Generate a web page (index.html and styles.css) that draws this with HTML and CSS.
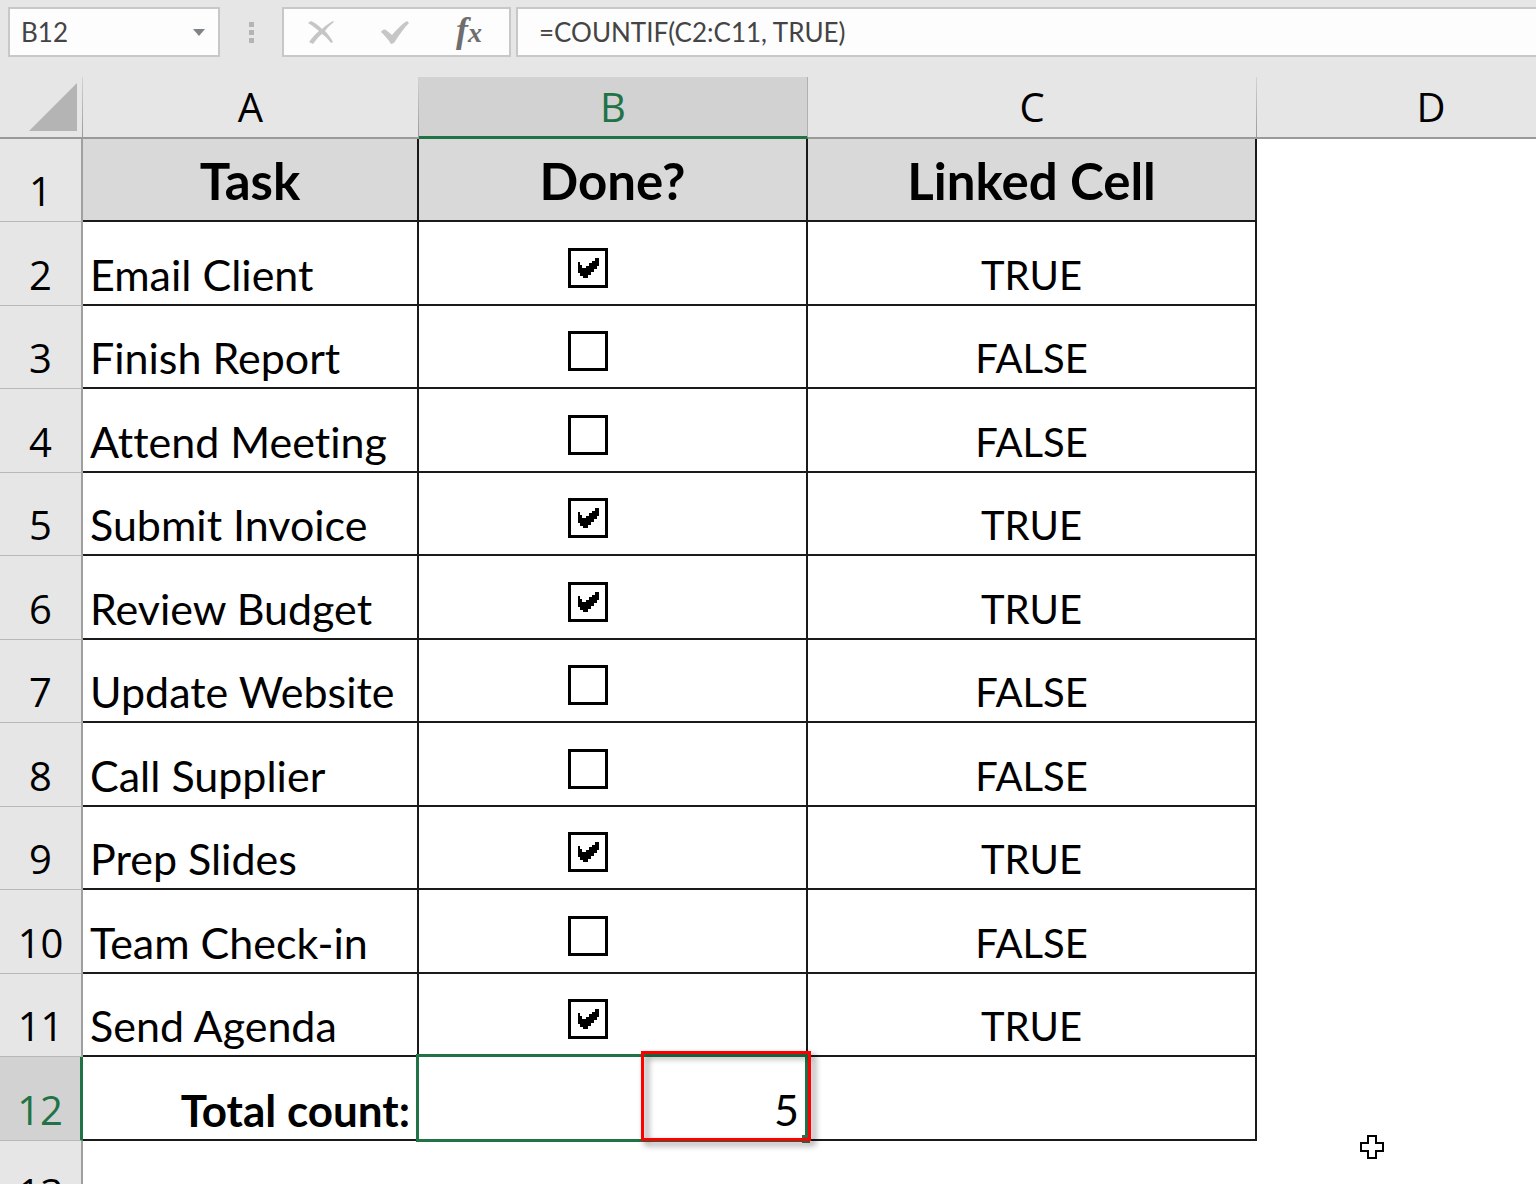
FILE: index.html
```
<!DOCTYPE html>
<html lang="en">
<head>
    <meta charset="UTF-8">
    <meta name="viewport" content="width=device-width, initial-scale=1.0">
    <title>Task checklist</title>
    <link rel="stylesheet" href="styles.css">
</head>
<body>
    <div class="formula-bar">
        <div class="name-box">
            <input type="text" value="B12" aria-label="Name box">
            <button type="button" aria-label="Open name list">
                <svg width="12" height="7" viewBox="0 0 12 7"><path d="M0 0h12L6 7z" fill="#7f8487"/></svg>
            </button>
        </div>
        <div class="grip"><span></span><span></span><span></span></div>
        <div class="tools">
            <button type="button" aria-label="Cancel">
                <svg width="28" height="26" viewBox="0 0 28 26"><path d="M1 4l3-2c5 2 8 5 11 8 3-3 7-6 11-8l1 1c-4 3-7 6-9 9 3 3 6 7 8 11l-2 1c-3-4-6-7-9-9-4 3-6 6-9 10l-4-2c3-4 6-8 10-11C8 9 5 6 1 4z" fill="#c6c6c6"/></svg>
            </button>
            <button type="button" aria-label="Enter">
                <svg width="30" height="26" viewBox="0 0 30 26"><path d="M1 13c1-2 3-3 5-2l6 5C17 10 22 5 27 2l2 2c-5 5-10 12-15 20l-3 1c-3-5-6-8-10-12z" fill="#c6c6c6"/></svg>
            </button>
            <button type="button" class="fx" aria-label="Insert function"><span class="f">f</span><span class="x">x</span></button>
        </div>
        <input class="formula" type="text" value="=COUNTIF(C2:C11, TRUE)" aria-label="Formula">
    </div>

    <div class="sheet">
        <table>
            <colgroup>
                <col class="col-num">
                <col class="col-a">
                <col class="col-b">
                <col class="col-c">
                <col class="col-d">
            </colgroup>
            <thead>
                <tr>
                    <th class="corner"><svg width="48" height="48" viewBox="0 0 48 48"><path d="M48 0v48H0z" fill="#b4b4b4"/></svg></th>
                    <th>A</th>
                    <th class="active">B</th>
                    <th>C</th>
                    <th>D</th>
                </tr>
            </thead>
            <tbody>
                <tr class="titles"><th>1</th><td>Task</td><td>Done?</td><td>Linked Cell</td><td></td></tr>
                <tr><th>2</th><td>Email Client</td><td><input type="checkbox" aria-label="Email Client" checked></td><td>TRUE</td><td></td></tr>
                <tr><th>3</th><td>Finish Report</td><td><input type="checkbox" aria-label="Finish Report"></td><td>FALSE</td><td></td></tr>
                <tr><th>4</th><td>Attend Meeting</td><td><input type="checkbox" aria-label="Attend Meeting"></td><td>FALSE</td><td></td></tr>
                <tr><th>5</th><td>Submit Invoice</td><td><input type="checkbox" aria-label="Submit Invoice" checked></td><td>TRUE</td><td></td></tr>
                <tr><th>6</th><td>Review Budget</td><td><input type="checkbox" aria-label="Review Budget" checked></td><td>TRUE</td><td></td></tr>
                <tr><th>7</th><td>Update Website</td><td><input type="checkbox" aria-label="Update Website"></td><td>FALSE</td><td></td></tr>
                <tr><th>8</th><td>Call Supplier</td><td><input type="checkbox" aria-label="Call Supplier"></td><td>FALSE</td><td></td></tr>
                <tr><th>9</th><td>Prep Slides</td><td><input type="checkbox" aria-label="Prep Slides" checked></td><td>TRUE</td><td></td></tr>
                <tr><th>10</th><td>Team Check-in</td><td><input type="checkbox" aria-label="Team Check-in"></td><td>FALSE</td><td></td></tr>
                <tr><th>11</th><td>Send Agenda</td><td><input type="checkbox" aria-label="Send Agenda" checked></td><td>TRUE</td><td></td></tr>
                <tr class="total">
                    <th class="active">12</th>
                    <td>Total count:</td>
                    <td class="selected">5<span class="selection"></span><span class="handle"></span><span class="highlight"></span></td>
                    <td></td>
                    <td></td>
                </tr>
                <tr class="blank"><th>13</th><td></td><td></td><td></td><td></td></tr>
            </tbody>
        </table>
        <svg class="cursor" width="24" height="24" viewBox="0 0 24 24"><path d="M8 1h8v7h7v8h-7v7H8v-7H1V8h7z" fill="#fff" stroke="#000" stroke-width="2"/></svg>
    </div>
</body>
</html>
```
FILE: styles.css
```
* {
    box-sizing: border-box;
}
body {
    margin: 0;
    height: 100vh;
    overflow: hidden;
    display: flex;
    flex-direction: column;
    background: #fff;
    color: #000;
    font-family: Lato, "Liberation Sans", sans-serif;
    font-variant-ligatures: none;
}
button,
input {
    margin: 0;
    padding: 0;
    border: none;
    background: none;
    color: #444;
    font-family: inherit;
    font-size: 26px;
    outline: none;
}

/* Formula bar */
.formula-bar {
    display: flex;
    flex: none;
    padding: 7px 0 20px 8px;
    background: #e6e6e6;
}
.name-box,
.tools,
.formula {
    height: 50px;
    border: 2px solid #c8c8c8;
    background: #fdfdfd;
}
.name-box {
    display: flex;
    width: 212px;
}
.name-box input {
    flex: 1;
    min-width: 0;
    padding-left: 11px;
}
.name-box button,
.tools button {
    display: flex;
    align-items: center;
    justify-content: center;
}
.name-box button {
    width: 38px;
}
.grip {
    display: flex;
    flex-direction: column;
    justify-content: center;
    align-items: center;
    gap: 3px;
    width: 62px;
}
.grip span {
    width: 5px;
    height: 5px;
    background: #b4b4b4;
}
.tools {
    display: flex;
    width: 229px;
    margin-right: 5px;
    padding-right: 3px;
}
.tools button {
    flex: 1;
}
.tools .fx {
    align-items: baseline;
    color: #6e6e6e;
    font-family: "Liberation Serif", serif;
    font-style: italic;
    font-weight: bold;
}
.fx .f {
    font-size: 36px;
}
.fx .x {
    font-size: 28px;
}
.formula {
    flex: 1;
    min-width: 0;
    padding-left: 21px;
    border-right: none;
}

/* Grid */
.sheet {
    position: relative;
    flex: 1;
    overflow: hidden;
}
table {
    width: 1606px;
    table-layout: fixed;
    border-collapse: separate;
    border-spacing: 0;
    font-size: 43px;
    line-height: 48px;
}
.col-num { width: 83px; }
.col-a { width: 336px; }
.col-b { width: 389px; }
.col-c { width: 449px; }
.col-d { width: 349px; }

th {
    padding: 0;
    background: #e6e6e6;
    font-family: "Open Sans", sans-serif;
    font-size: 40px;
    font-weight: normal;
}
thead th {
    height: 62px;
    border-right: 1px solid;
    border-bottom: 2px solid #a0a0a0;
    border-image: linear-gradient(#d4d4d4, #999) 1;
    border-image-width: 0 1px 2px 0;
    vertical-align: middle;
}
.corner svg {
    display: block;
    margin: 0 5px 0 auto;
}
thead .active {
    border-image: none;
    border-right: 1px solid #b0b0b0;
    border-bottom: 3px solid #217346;
}
.active {
    background: #d2d2d2;
    color: #217346;
}

tbody th {
    border-right: 2px solid #a0a0a0;
    border-bottom: 1px solid #b8b8b8;
    padding-bottom: 6px;
    vertical-align: bottom;
}
tbody tr {
    height: 83px;
}
tbody tr:nth-child(even) {
    height: 84px;
}
td {
    padding: 0 7px 5px;
    border-right: 2px solid #1a1a1a;
    border-bottom: 2px solid #1a1a1a;
    vertical-align: bottom;
    white-space: nowrap;
}
td:nth-child(4) {
    font-size: 40px;
    text-align: center;
}
td:last-child,
.blank td {
    border: none;
}
.titles td,
.titles td:nth-child(4) {
    padding: 3px 0 0;
    font-size: 51px;
    font-weight: bold;
    text-align: center;
    vertical-align: middle;
}
.titles td:not(:last-child) {
    background: #d9d9d9;
}

input[type="checkbox"] {
    appearance: none;
    display: block;
    width: 40px;
    height: 40px;
    margin: 0 0 11px 142px;
    border: 3px solid #000;
    background: #fff;
}
input[type="checkbox"]:checked::before {
    content: "";
    display: block;
    width: 21px;
    height: 20px;
    margin: 7px;
    background: #000;
    clip-path: polygon(0 4px, 2px 4px, 2px 7px, 4px 7px, 4px 10px, 8px 10px, 8px 8px, 11px 8px, 11px 5px, 14px 5px, 14px 3px, 17px 3px, 17px 0, 21px 0, 21px 8px, 19px 8px, 19px 11px, 16px 11px, 16px 14px, 13px 14px, 13px 17px, 10px 17px, 10px 20px, 5px 20px, 5px 18px, 2px 18px, 2px 15px, 0 15px);
}

/* Totals row */
.total th {
    border-right: 3px solid #217346;
}
.total td {
    text-align: right;
}
.total td:nth-child(2) {
    font-size: 44px;
    font-weight: bold;
}
.total .selected {
    position: relative;
}
.selection {
    position: absolute;
    inset: -3px -2px -3px -3px;
    border: 3px solid #217346;
}
.handle {
    position: absolute;
    right: -4px;
    bottom: -4px;
    width: 8px;
    height: 8px;
    background: #3f6b54;
}
.highlight {
    position: absolute;
    top: -6px;
    right: -5px;
    bottom: -2px;
    width: 170px;
    border: 3px solid #f00;
    filter: drop-shadow(4px 4px 3px rgba(0, 0, 0, 0.5));
}

/* Mouse pointer over the sheet */
.cursor {
    position: absolute;
    left: 1360px;
    top: 1058px;
}
```
